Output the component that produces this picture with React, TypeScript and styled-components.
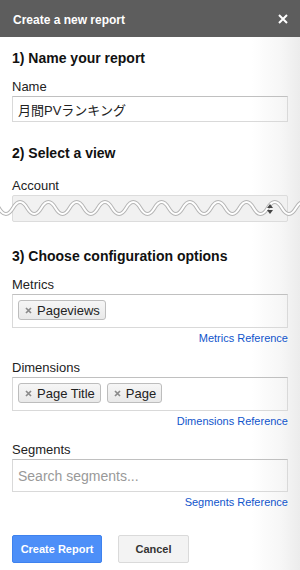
import styled, { createGlobalStyle } from "styled-components";

const GlobalStyle = createGlobalStyle`
  body {
    margin: 0;
    font-family: "Liberation Sans", Arial, "Noto Sans CJK JP", sans-serif;
    color: #222;
  }
`;

const Panel = styled.div`
  width: 300px;
  height: 570px;
  overflow: hidden;
  background: linear-gradient(to right, #fff 0%, #fff 84%, #f6f6f6 94%, #ececec 100%);
`;

const Header = styled.div`
  height: 37px;
  background: #5d5d5d;
  display: flex;
  align-items: center;
  justify-content: space-between;
  padding: 0 12px 0 13px;
  color: #fff;
`;

const HeaderTitle = styled.div`
  font-size: 12px;
  font-weight: 700;
  padding-top: 2px;
`;

const CloseIcon = styled.svg`
  width: 10px;
  height: 10px;
  margin-top: 1px;
`;

const Body = styled.div`
  padding: 0 12px;
`;

const SectionTitle = styled.div<{ $top: number }>`
  margin-top: ${(p) => p.$top}px;
  font-size: 14px;
  font-weight: 700;
  line-height: 17px;
  color: #111;
`;

const Label = styled.div<{ $top: number }>`
  margin-top: ${(p) => p.$top}px;
  margin-bottom: 2px;
  font-size: 13px;
  line-height: 15px;
  color: #222;
`;

const TextBox = styled.div<{ $height: number; $muted?: boolean }>`
  box-sizing: border-box;
  height: ${(p) => p.$height}px;
  border: 1px solid #d9d9d9;
  border-top-color: #c0c0c0;
  padding: 0 5px;
  display: flex;
  align-items: center;
  font-size: ${(p) => (p.$muted ? 14 : 13)}px;
  color: ${(p) => (p.$muted ? "#999" : "#222")};
`;

const SelectBox = styled.div`
  position: relative;
  box-sizing: border-box;
  height: 27px;
  background: #f1f1f1;
  border: 1px solid #dcdcdc;
  border-radius: 2px;
`;

const Wave = styled.svg`
  position: absolute;
  left: -13px;
  top: 2px;
  width: 300px;
  height: 20px;
  overflow: visible;
`;

const SelectArrows = styled.svg`
  position: absolute;
  right: 14px;
  top: 8px;
  width: 6px;
  height: 10px;
`;

const TokenBox = styled.div`
  box-sizing: border-box;
  height: 34px;
  border: 1px solid #d9d9d9;
  border-top-color: #c0c0c0;
  padding: 5px 5px;
  display: flex;
  align-items: flex-start;
  gap: 6px;
`;

const Chip = styled.div`
  box-sizing: border-box;
  height: 20px;
  display: flex;
  align-items: center;
  gap: 5px;
  padding: 0 5px 0 6px;
  border: 1px solid #bdbdbd;
  border-radius: 3px;
  background: linear-gradient(#f6f6f6, #e9e9e9);
  font-size: 13px;
  color: #222;
`;

const ChipX = styled.svg`
  width: 7px;
  height: 7px;
  margin-top: 1px;
`;

const RefLink = styled.div`
  margin-top: 4px;
  text-align: right;
  font-size: 11px;
  line-height: 13px;
  color: #1155cc;
`;

const Actions = styled.div`
  margin-top: 26px;
  display: flex;
  gap: 16px;
`;

const Button = styled.div<{ $primary?: boolean }>`
  box-sizing: border-box;
  height: 28px;
  width: ${(p) => (p.$primary ? 90 : 71)}px;
  display: flex;
  align-items: center;
  justify-content: center;
  border-radius: 2px;
  font-size: 11px;
  font-weight: 700;
  background: ${(p) => (p.$primary ? "#4d8ff8" : "#f3f3f3")};
  border: 1px solid ${(p) => (p.$primary ? "#3e82ee" : "#dadada")};
  color: ${(p) => (p.$primary ? "#fff" : "#333")};
`;

const wavePath = (() => {
  const period = 28.3;
  const mid = 10;
  let d = `M -15.3 ${mid}`;
  for (let x = -15.3; x < 320; x += period) {
    d += ` Q ${x + period / 4} ${mid - 12} ${x + period / 2} ${mid} T ${x + period} ${mid}`;
  }
  return d;
})();

const Token = ({ text }: { text: string }) => (
  <Chip>
    <ChipX viewBox="0 0 7 7">
      <path d="M1 1 L6 6 M6 1 L1 6" stroke="#8a8a8a" strokeWidth="1.7" />
    </ChipX>
    {text}
  </Chip>
);

export default function App() {
  return (
    <Panel>
      <GlobalStyle />
      <Header>
        <HeaderTitle>Create a new report</HeaderTitle>
        <CloseIcon viewBox="0 0 10 10">
          <path d="M1 1 L9 9 M9 1 L1 9" stroke="#fff" strokeWidth="2" />
        </CloseIcon>
      </Header>
      <Body>
        <SectionTitle $top={13}>1) Name your report</SectionTitle>
        <Label $top={12}>Name</Label>
        <TextBox $height={26}>月間PVランキング</TextBox>

        <SectionTitle $top={23}>2) Select a view</SectionTitle>
        <Label $top={16}>Account</Label>
        <SelectBox>
          <Wave viewBox="0 0 300 20">
            <path d={wavePath} fill="none" stroke="#b5b5b5" strokeWidth="4" />
            <path d={wavePath} fill="none" stroke="#fff" strokeWidth="2" />
          </Wave>
          <SelectArrows viewBox="0 0 6 10">
            <path d="M3 0 L6 4 L0 4 Z M0 6 L6 6 L3 10 Z" fill="#444" />
          </SelectArrows>
        </SelectBox>

        <SectionTitle $top={26}>3) Choose configuration options</SectionTitle>
        <Label $top={12}>Metrics</Label>
        <TokenBox>
          <Token text="Pageviews" />
        </TokenBox>
        <RefLink>Metrics Reference</RefLink>

        <Label $top={15}>Dimensions</Label>
        <TokenBox>
          <Token text="Page Title" />
          <Token text="Page" />
        </TokenBox>
        <RefLink>Dimensions Reference</RefLink>

        <Label $top={14}>Segments</Label>
        <TextBox $height={33} $muted>
          Search segments...
        </TextBox>
        <RefLink>Segments Reference</RefLink>

        <Actions>
          <Button $primary>Create Report</Button>
          <Button>Cancel</Button>
        </Actions>
      </Body>
    </Panel>
  );
}
